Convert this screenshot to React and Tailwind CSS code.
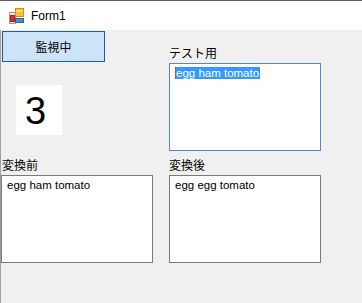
import React from 'react';

function FormIcon() {
  return (
    <svg width="16" height="16" viewBox="0 0 16 16">
      <rect x="0.5" y="4.5" width="6" height="11" fill="#e9e9e9" stroke="#9a9a9a" />
      <rect x="1.5" y="7.5" width="4" height="6" fill="#d6312b" stroke="#a51f1b" />
      <rect x="6.5" y="0.5" width="8" height="8" fill="#f7c531" stroke="#d88a12" />
      <rect x="7.5" y="2" width="6" height="2" fill="#fde27a" />
      <rect x="6.5" y="10.5" width="8" height="4" fill="#4e8ad8" stroke="#2d5fa6" />
    </svg>
  );
}

function TextBox({ children, focused }) {
  return (
    <div
      className={`w-[152px] h-[88px] bg-white border ${focused ? 'border-[#5584d1]' : 'border-[#7a7a7a]'} pl-[5px] pt-[2px] text-[11.5px] leading-[14px] text-black`}
      style={{ fontFamily: '"Liberation Sans", Arial, sans-serif' }}
    >
      {children}
    </div>
  );
}

const jp = { fontFamily: '"Noto Sans CJK JP", "Noto Sans", sans-serif' };

export default function App() {
  return (
    <div className="w-[362px] h-[303px] flex flex-col overflow-hidden">
      {/* title bar */}
      <div className="h-[30px] bg-white border-t border-[#5c5c5c] flex items-center pl-[9px] gap-[6px]">
        <FormIcon />
        <span className="text-[12px] text-black" style={{ fontFamily: '"Liberation Sans", Arial, sans-serif' }}>
          Form1
        </span>
      </div>

      {/* client area */}
      <div className="flex-1 bg-[#f0f0f0] border-l border-[#a0a0a0] flex gap-[16px]">
        {/* left column */}
        <div className="flex flex-col w-[152px]">
          <button
            className="ml-[1px] mt-[1px] w-[103px] h-[31px] bg-[#cce4f7] border border-[#1e5aa0] flex items-center justify-center text-[12px] text-black"
            style={jp}
          >
            監視中
          </button>
          <div
            className="ml-[15px] mt-[23px] w-[46px] h-[50px] bg-white pt-[7px] pl-[9px] text-[38px] leading-[38px] text-black"
            style={{ fontFamily: '"Liberation Sans", Arial, sans-serif' }}
          >
            3
          </div>
          <div className="mt-[22px] ml-[1px] h-[16px] text-[12px] leading-[16px] text-black" style={jp}>
            変換前
          </div>
          <div className="mt-[2px]">
            <TextBox>egg ham tomato</TextBox>
          </div>
        </div>

        {/* right column */}
        <div className="flex flex-col w-[152px]">
          <div className="mt-[15px] h-[16px] text-[12px] leading-[16px] text-black" style={jp}>
            テスト用
          </div>
          <div className="mt-[2px]">
            <TextBox focused>
              <span className="border-l border-[#b8581c] bg-[#3399ff] text-white pr-[1px]">egg ham tomato</span>
            </TextBox>
          </div>
          <div className="mt-[6px] h-[16px] text-[12px] leading-[16px] text-black" style={jp}>
            変換後
          </div>
          <div className="mt-[2px]">
            <TextBox>egg egg tomato</TextBox>
          </div>
        </div>
      </div>
    </div>
  );
}
